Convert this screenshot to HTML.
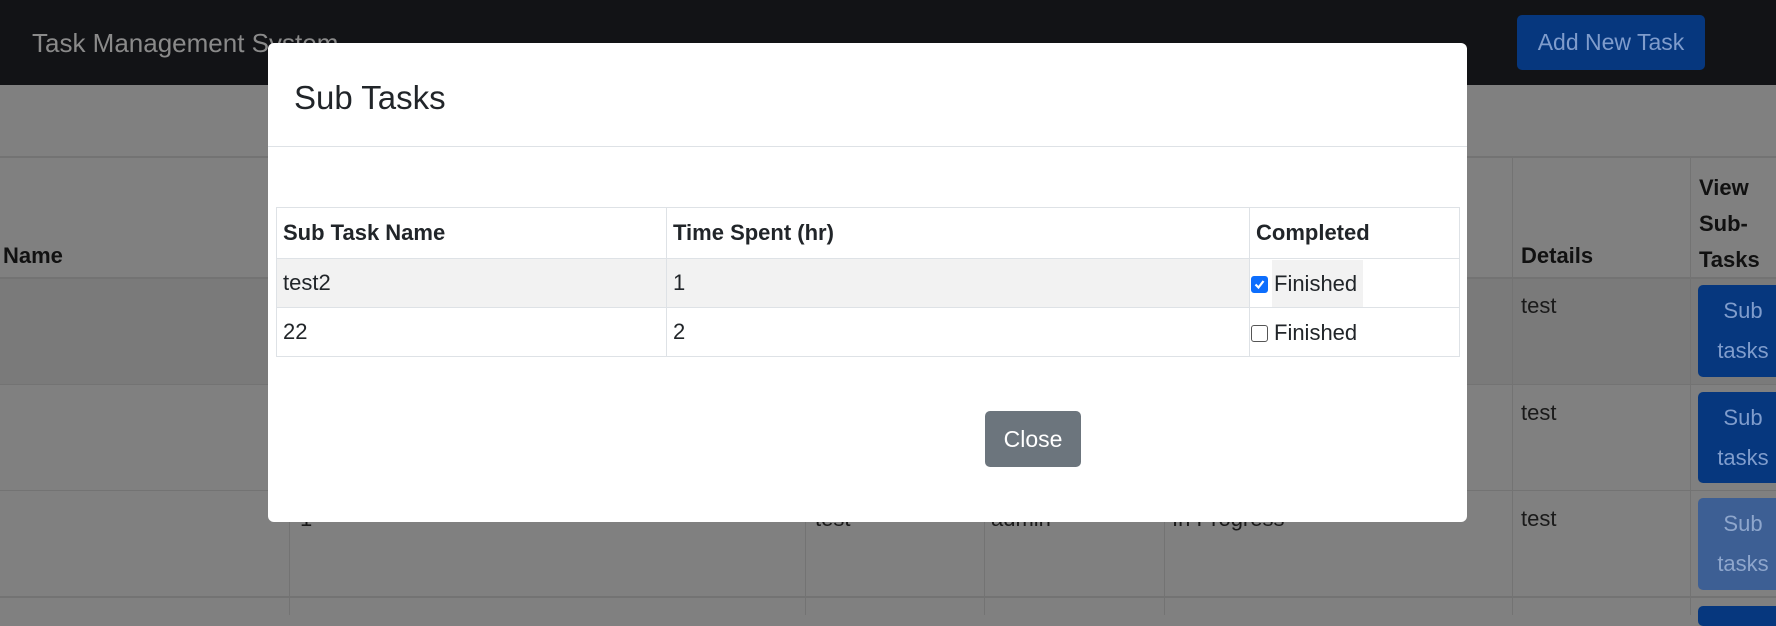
<!DOCTYPE html>
<html><head><meta charset="utf-8"><style>
*{margin:0;padding:0;box-sizing:border-box}
body{width:1776px;height:615px;overflow:hidden;background:#808080;font-family:"Liberation Sans",sans-serif;position:relative;color:#111}
.a{position:absolute}
.nav{left:0;top:0;width:1776px;height:85px;background:#121316}
.brand{left:32px;top:28px;font-size:26px;color:#8a8a8a}
.add{left:1517px;top:15px;width:188px;height:55px;background:#06377e;border-radius:5px;color:#7f9ccc;font-size:23px;line-height:55px;text-align:center}
.hl{height:2px;background:#737373;left:0;width:1776px}
.vl{width:1px;background:#737373}
.bt{font-weight:bold;font-size:22px;color:#111}
.tt{font-size:22px;color:#1a1a1a}
.sb{left:1698px;width:90px;background:#06377e;border-radius:5px;color:#7f9ccc;font-size:22px;text-align:center;line-height:40px;padding-top:6px}
.modal{left:268px;top:43px;width:1199px;height:479px;background:#fff;border-radius:6px}
.mt{left:26px;top:36px;font-size:33px;color:#212529}
.md{left:0;top:103px;width:1199px;height:1px;background:#dee2e6}
table{position:absolute;left:8px;top:164px;width:1184px;border-collapse:collapse;font-size:22px;color:#212529}
td,th{border:1px solid #dee2e6;text-align:left;padding:0 6px;vertical-align:middle}
th{height:51px;font-weight:bold}
td{height:49px}
.close{left:717px;top:368px;width:96px;height:56px;background:#6c757d;border-radius:5px;color:#fff;font-size:23px;line-height:56px;text-align:center}
.cb{display:inline-block;width:17px;height:17px;border:1px solid #555;border-radius:3px;vertical-align:-2px;margin-left:-5px;margin-right:4px;background:#fff}
.cb.on{background:#0d6efd;border-color:#0d6efd;position:relative}
.fin{display:inline-block;padding:0 6px 0 2px;line-height:47px}
</style></head><body>
<div class="a nav"></div>
<div class="a brand">Task Management System</div>
<div class="a add">Add New Task</div>
<div class="a" style="left:0;top:278px;width:1776px;height:107px;background:#7a7a7a"></div>
<div class="a hl" style="top:156px"></div>
<div class="a hl" style="top:277px"></div>
<div class="a hl" style="top:384px;height:1px"></div>
<div class="a hl" style="top:490px;height:1px"></div>
<div class="a hl" style="top:596px"></div>
<div class="a vl" style="left:289px;top:156px;height:459px"></div>
<div class="a vl" style="left:805px;top:156px;height:459px"></div>
<div class="a vl" style="left:984px;top:156px;height:459px"></div>
<div class="a vl" style="left:1164px;top:156px;height:459px"></div>
<div class="a vl" style="left:1512px;top:156px;height:459px"></div>
<div class="a vl" style="left:1690px;top:156px;height:459px"></div>
<div class="a bt" style="left:3px;top:243px">Name</div>
<div class="a bt" style="left:1521px;top:243px">Details</div>
<div class="a bt" style="left:1699px;top:170px;line-height:36px">View<br>Sub-<br>Tasks</div>
<div class="a tt" style="left:1521px;top:293px">test</div>
<div class="a tt" style="left:1521px;top:400px">test</div>
<div class="a tt" style="left:1521px;top:506px">test</div>
<div class="a tt" style="left:300px;top:506px">1</div>
<div class="a tt" style="left:815px;top:506px">test</div>
<div class="a tt" style="left:991px;top:506px">admin</div>
<div class="a tt" style="left:1172px;top:506px">In Progress</div>
<div class="a sb" style="top:285px;height:92px">Sub<br>tasks</div>
<div class="a sb" style="top:392px;height:91px">Sub<br>tasks</div>
<div class="a sb" style="top:498px;height:92px;background:#3d5f94;color:#8ea6cc">Sub<br>tasks</div>
<div class="a sb" style="top:606px;height:20px"></div>
<div class="a modal">
<div class="a mt">Sub Tasks</div>
<div class="a md"></div>
<table>
<tr><th style="width:390px">Sub Task Name</th><th style="width:583px">Time Spent (hr)</th><th>Completed</th></tr>
<tr style="background:#f2f2f2"><td>test2</td><td>1</td><td style="background:#fff;padding:0 6px"><span class="cb on"><svg width="15" height="15" viewBox="0 0 15 15" style="position:absolute;left:0;top:0"><path d="M3.5 7.5l3 3 5-6.5" stroke="#fff" stroke-width="2.2" fill="none"/></svg></span><span class="fin" style="background:#f2f2f2">Finished</span></td></tr>
<tr><td>22</td><td>2</td><td><span class="cb"></span><span class="fin">Finished</span></td></tr>
</table>
<div class="a close">Close</div>
</div>
</body></html>
